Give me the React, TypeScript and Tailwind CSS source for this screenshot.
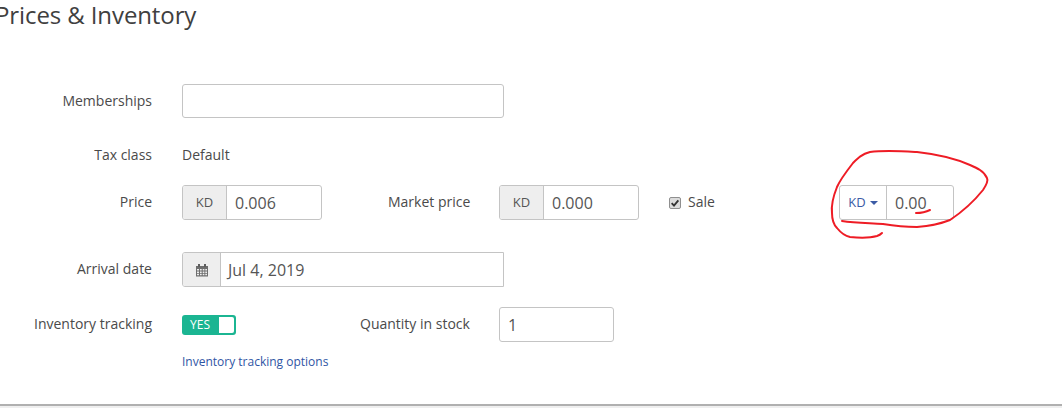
import React from "react";

const Label: React.FC<{ children: React.ReactNode }> = ({ children }) => (
  <div className="mb-[2px] w-[152px] shrink-0 text-right text-[14px] text-[#4a4a4a]">{children}</div>
);

const Addon: React.FC<{ children: React.ReactNode; w: string }> = ({ children, w }) => (
  <div className={`${w} flex h-full shrink-0 items-center justify-center border-r border-[#c4c4c4] bg-[#eeeeee] text-[13px] text-[#555]`}>
    {children}
  </div>
);

// old font-awesome style calendar with the day grid
const CalendarIcon = () => (
  <svg viewBox="0 0 14 14" className="h-[14px] w-[14px]">
    <path d="M1 3h12v10.5H1z" fill="#6e6e6e" />
    <path d="M3 1h2v3H3zM9 1h2v3H9z" fill="#5e5e5e" />
    <path
      d="M2 6h2v1.5H2zM5 6h1.7v1.5H5zM7.7 6h1.7v1.5H7.7zM10.3 6H12v1.5h-1.7zM2 8.4h2v1.5H2zM5 8.4h1.7v1.5H5zM7.7 8.4h1.7v1.5H7.7zM10.3 8.4H12v1.5h-1.7zM2 10.8h2v1.5H2zM5 10.8h1.7v1.5H5zM7.7 10.8h1.7v1.5H7.7zM10.3 10.8H12v1.5h-1.7z"
      fill="#eeeeee"
    />
  </svg>
);

export default function App() {
  return (
    <div className="relative h-[408px] w-[1062px] overflow-hidden bg-white font-['Open_Sans',sans-serif]">
      <h1 className="ml-[-5px] h-[84px] text-[24px] leading-[30px] tracking-[-0.1px] text-[#404040]">Prices &amp; Inventory</h1>

      {/* Memberships */}
      <div className="flex h-[34px] items-center">
        <Label>Memberships</Label>
        <div className="ml-[30px] h-[34px] w-[322px] rounded-[3px] border border-[#c4c4c4]"></div>
      </div>

      {/* Tax class */}
      <div className="mt-[27px] flex h-[20px] items-center">
        <Label>Tax class</Label>
        <div className="mb-[2px] ml-[30px] text-[14px] text-[#4a4a4a]">Default</div>
      </div>

      {/* Prices */}
      <div className="mt-[20px] flex h-[35px] items-center">
        <Label>Price</Label>
        <div className="ml-[30px] flex h-[35px] w-[140px] items-center overflow-hidden rounded-[3px] border border-[#c4c4c4]">
          <Addon w="w-[44px]">KD</Addon>
          <span className="pl-[8px] text-[16px] text-[#555]">0.006</span>
        </div>
        <div className="mb-[2px] ml-[66px] w-[81px] whitespace-nowrap text-right text-[14px] text-[#4a4a4a]">Market price</div>
        <div className="ml-[30px] flex h-[35px] w-[140px] items-center overflow-hidden rounded-[3px] border border-[#c4c4c4]">
          <Addon w="w-[44px]">KD</Addon>
          <span className="pl-[8px] text-[16px] text-[#555]">0.000</span>
        </div>
        <div className="ml-[30px] flex h-[12px] w-[12px] items-center justify-center rounded-[2px] border border-[#8f8f8f] bg-[#dcdcdc]">
          <svg viewBox="0 0 12 12" className="h-[10px] w-[10px]">
            <path d="M2 6.2 4.8 9.2 10 2.8" fill="none" stroke="#333" strokeWidth="2.2" />
          </svg>
        </div>
        <span className="mb-[2px] ml-[7px] w-[26px] text-[14px] text-[#4a4a4a]">Sale</span>
        <div className="ml-[125px] flex h-[35px] w-[115px] items-center overflow-hidden rounded-[3px] border border-[#c4c4c4]">
          <div className="flex h-full w-[47px] shrink-0 items-center justify-center gap-[4px] border-r border-[#c4c4c4] text-[13px] text-[#3b5ba5]">
            KD
            <span className="mt-[1px] h-0 w-0 border-x-[4px] border-t-[4px] border-x-transparent border-t-[#3b5ba5]"></span>
          </div>
          <span className="pl-[8px] text-[16px] text-[#555]">0.00</span>
        </div>
      </div>

      {/* Arrival date */}
      <div className="mt-[32px] flex h-[35px] items-center">
        <Label>Arrival date</Label>
        <div className="ml-[30px] flex h-[35px] w-[322px] items-center overflow-hidden rounded-l-[3px] border border-[#c4c4c4]">
          <Addon w="w-[38px]">
            <CalendarIcon />
          </Addon>
          <span className="pl-[7px] text-[16px] text-[#555]">Jul 4, 2019</span>
        </div>
      </div>

      {/* Inventory */}
      <div className="mt-[20px] flex h-[35px] items-center">
        <Label>Inventory tracking</Label>
        <div className="ml-[30px] flex h-[20px] w-[54px] items-center justify-between rounded-[3px] bg-[#1bb592] pl-[8px] pr-[2px]">
          <span className="text-[12px] text-white">YES</span>
          <span className="h-[16px] w-[15px] rounded-r-[2px] bg-white"></span>
        </div>
        <div className="mb-[3px] ml-[124px] w-[109px] whitespace-nowrap text-[14px] text-[#4a4a4a]">Quantity in stock</div>
        <div className="ml-[30px] flex h-[35px] w-[115px] items-center rounded-[3px] border border-[#c4c4c4] pl-[8px] text-[16px] text-[#555]">
          1
        </div>
      </div>

      <div className="ml-[182px] mt-[12px] text-[12px] leading-[16px] text-[#2f55a4]">Inventory tracking options</div>

      <div className="mt-[34px] h-[2px] w-full bg-[#b0b0b0]"></div>
      <div className="h-[4px] w-full bg-[#efefef]"></div>

      {/* Red hand-drawn annotation */}
      <svg className="absolute left-0 top-0 h-[408px] w-[1062px]" viewBox="0 0 1062 408" fill="none">
        <path
          d="M842 221C855 223 868 223 883 224C895 226 906 227 917 227C930 226 940 224 950 220C962 212 975 200 983 190C987 184 988 180 987 178C984 171 977 168 970 165C952 157 935 154 917 152C900 151 885 150 870 152C862 154 858 158 853 163C846 172 840 180 837 187C833 197 831 205 832 213C832 220 834 225 837 228C841 233 845 236 850 237C860 238 870 238 877 236C880 235 881 234 882 233"
          stroke="#ee1c25"
          strokeWidth="2"
          strokeLinecap="round"
        />
        <path d="M916 213C921 213 926 212 930 210" stroke="#ee1c25" strokeWidth="2" strokeLinecap="round" />
      </svg>
    </div>
  );
}
